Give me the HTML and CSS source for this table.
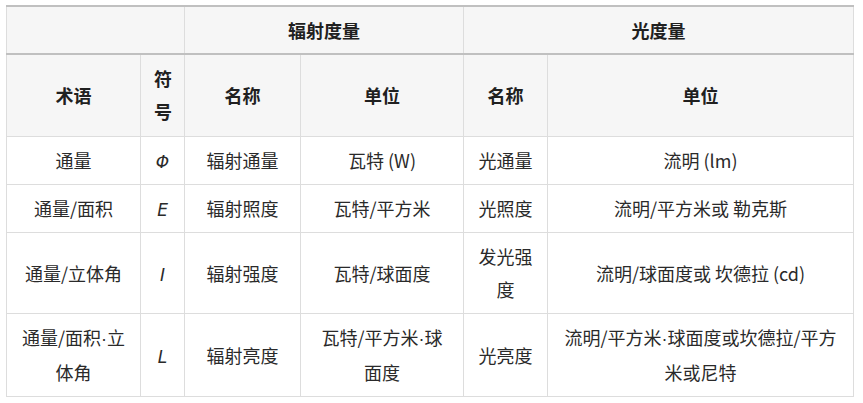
FILE: index.html
```html
<!DOCTYPE html>
<html lang="zh">
<head>
<meta charset="utf-8">
<link rel="stylesheet" href="styles.css">
</head>
<body>
<table class="wikitable">
  <colgroup>
    <col class="c1"><col class="c2"><col class="c3"><col class="c4"><col class="c5"><col class="c6">
  </colgroup>
  <thead>
    <tr class="top">
      <th colspan="2"></th>
      <th colspan="2">辐射度量</th>
      <th colspan="2">光度量</th>
    </tr>
    <tr class="sub">
      <th>术语</th>
      <th>符号</th>
      <th>名称</th>
      <th>单位</th>
      <th>名称</th>
      <th>单位</th>
    </tr>
  </thead>
  <tbody>
    <tr>
      <td>通量</td><td><i>Φ</i></td><td>辐射通量</td><td>瓦特 (W)</td><td>光通量</td><td>流明 (lm)</td>
    </tr>
    <tr>
      <td>通量/面积</td><td><i>E</i></td><td>辐射照度</td><td>瓦特/平方米</td><td>光照度</td><td>流明/平方米或 勒克斯</td>
    </tr>
    <tr>
      <td>通量/立体角</td><td><i>I</i></td><td>辐射强度</td><td>瓦特/球面度</td><td>发光强度</td><td>流明/球面度或 坎德拉 (cd)</td>
    </tr>
    <tr>
      <td>通量/面积<span class="dot">·</span>立体角</td><td><i>L</i></td><td>辐射亮度</td><td>瓦特/平方米<span class="dot">·</span>球面度</td><td>光亮度</td><td>流明/平方米<span class="dot">·</span>球面度或坎德拉/平方米或尼特</td>
    </tr>
  </tbody>
</table>
</body>
</html>
```
FILE: styles.css
```css
html, body {
  margin: 0;
  padding: 0;
  background: #ffffff;
}
body {
  padding: 5px 0 0 6px;
  font-family: "Noto Sans CJK SC", "Noto Sans", sans-serif;
  font-size: 18px;
  line-height: 33px;
  color: #2a2a2a;
}
.wikitable {
  border-collapse: collapse;
  table-layout: fixed;
  width: 847px;
  border-top: 2px solid #c0c0c0;
}
.c1 { width: 134px; }
.c2 { width: 44px; }
.c3 { width: 116px; }
.c4 { width: 163px; }
.c5 { width: 84px; }
.c6 { width: 306px; }
.wikitable th,
.wikitable td {
  border: 1px solid #dddddd;
  padding: 7px 13px;
  text-align: center;
  vertical-align: middle;
}
.wikitable th {
  background: #f6f6f6;
  font-weight: bold;
  color: #202020;
}
.wikitable tr.top th {
  border-bottom: 2px solid #c0c0c0;
  border-top: none;
  padding-top: 7px;
  padding-bottom: 6px;
}
.wikitable tr.sub th {
  padding-top: 7px;
  padding-bottom: 8px;
}
.wikitable td {
  background: #ffffff;
}
.wikitable td i {
  font-family: "DejaVu Sans", sans-serif;
  font-size: 17px;
  line-height: 1;
}
.dot {
  font-family: "Liberation Sans", sans-serif;
}
```
